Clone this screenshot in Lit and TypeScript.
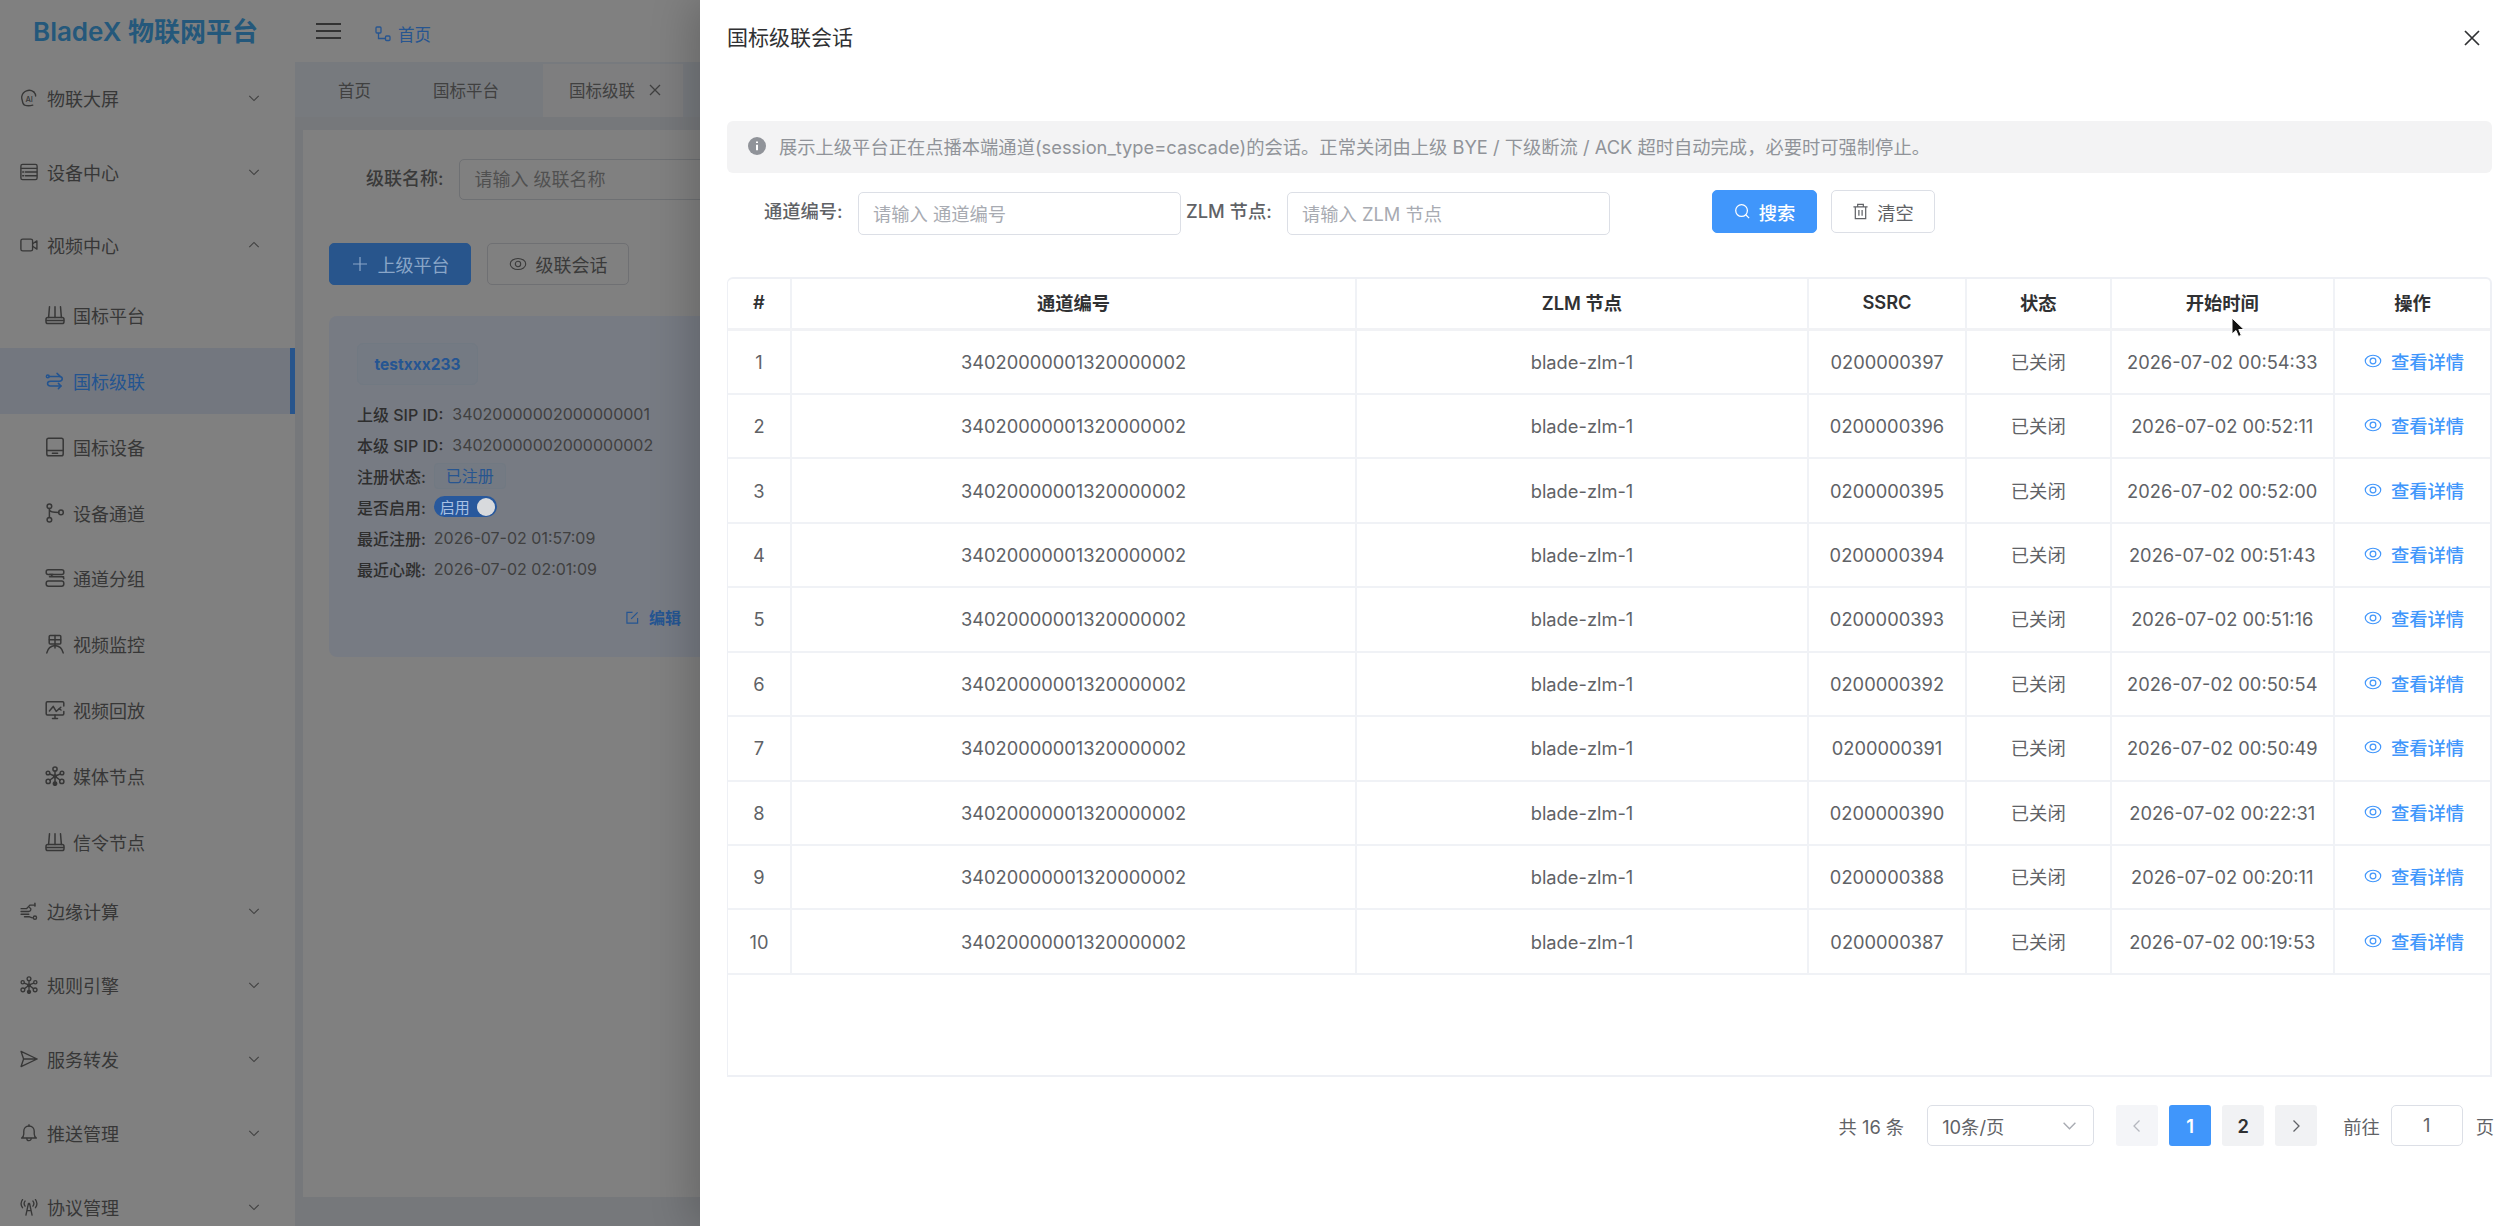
import { LitElement, css, html } from 'lit';
import { customElement } from 'lit/decorators.js';

const routerIcon = html`<svg class="ico" viewBox="0 0 20 20"><path d="M4.500 1.800 3.600 12.500M10 1.800v10.700M15.500 1.800l.9 10.700" /><rect x="1" y="12.500" width="18" height="6" rx="1.800" /><path d="M1.500 15.500h17" /></svg>`;
const nodesIcon = html`<svg class="ico" viewBox="0 0 20 20"><circle cx="10" cy="3" r="2.100" /><circle cx="3" cy="7" r="1.800" /><circle cx="17" cy="7" r="1.800" /><circle cx="3.200" cy="15.400" r="2.100" /><circle cx="16.800" cy="15.400" r="2.100" /><circle cx="10" cy="17.600" r="1.700" fill="currentColor" /><circle cx="10" cy="10.400" r="1.400" fill="currentColor" /><path d="M10 5.200v4.200M4.800 8l4.200 1.700M15.200 8 11 9.700M5 14l3.900-2.900M15 14l-3.900-2.900M10 11.500v4.500" /></svg>`;

const icons: Record<string, unknown> = {
  screen: html`<svg class="ico" viewBox="0 0 20 20"><path d="M15.200 3.200A8.300 8.300 0 0 0 2 8.200c-.4 2.400.4 3.600.6 5 .3 2 .6 4 2.600 4.800 2.400.8 6 .8 9 0" /><path d="M15.400 3.400c1.400 1.400 2 2.800 2 4.400" /><text class="ai" x="6" y="14.500">AI</text></svg>`,
  device: html`<svg class="ico" viewBox="0 0 20 20"><rect x="1" y="1.600" width="18" height="16.800" rx="1.800" /><path d="M1.500 6h17M6 10h12.500M6 14.200h12.500M3 10h1M3 14.200h1" /></svg>`,
  video: html`<svg class="ico" viewBox="0 0 20 20"><rect x="1" y="3.400" width="13" height="13.200" rx="2" /><path d="M14 8.600 18.800 5.400v9.200L14 11.400" /></svg>`,
  router: routerIcon,
  cascade: html`<svg class="ico" viewBox="0 0 20 20"><path d="M4 5.400h10.400c3.800 0 3.800 4.800 0 4.800H5.400c-3.800 0-3.800 4.800 0 4.800H16" /><path d="M12 2.400 15.200 5.400M13.400 12.400 16 15l-2.600 2.600" /><circle cx="2.800" cy="5.400" r="1.400" /></svg>`,
  gbdevice: html`<svg class="ico" viewBox="0 0 20 20"><rect x="1.800" y="1.200" width="16.400" height="17.600" rx="1.800" /><path d="M2.200 13.400h15.600M7.400 16.200h5.200" /></svg>`,
  branch: html`<svg class="ico" viewBox="0 0 20 20"><circle cx="4.400" cy="3.200" r="2.300" /><circle cx="4.400" cy="16.800" r="2.300" /><circle cx="16" cy="9.400" r="2.300" /><path d="M4.400 5.500v9M4.400 7c.6 2 3.400 2.400 9.300 2.400" /></svg>`,
  group: html`<svg class="ico" viewBox="0 0 20 20"><rect x="1.200" y="1.800" width="17.600" height="4.600" rx="2" /><path d="M18.600 8.800H4.500M18.800 10.800c0-1.200-.8-2-2-2M4.500 6.400H8c-1.600 0-2 2.400 0 2.400" /><rect x="1.200" y="13" width="17.600" height="5.200" rx="2.200" /></svg>`,
  monitor: html`<svg class="ico" viewBox="0 0 20 20"><rect x="4.200" y="1.400" width="11.600" height="8.600" rx="1" /><path d="M4.400 5.800h11.200M10 1.600V14M10 11.500c-4.200.4-7.200 3-8.200 7.400M10 11.500c4.200.4 7.200 3 8.200 7.400" /></svg>`,
  playback: html`<svg class="ico" viewBox="0 0 20 20"><path d="M18.800 6V3c0-.8-.6-1.200-1.200-1.200H2.400c-.6 0-1.200.4-1.200 1.200v10.800c0 .8.6 1.200 1.200 1.200h15.200c.6 0 1.200-.4 1.200-1.200v-2.400" /><path d="M4.400 11 8.200 6.400l3 5 3-2.600M7.500 18.400h5M10 15v3.400" /><path d="M15.800 7.200l-1.600 1.600 1.800 1.200" /></svg>`,
  nodes: nodesIcon,
  edge: html`<svg class="ico" viewBox="0 0 20 20"><path d="M1.200 7.400h6l4-4h5.400M1.200 10.600h8.400c2.600 0 3.600-3.400 1-4.400M1.200 13.600h8.600M5 16.400h5.600l3.200 1.200" /><path d="M16.600 1.400v3.200" /><circle cx="16.600" cy="17.400" r="1.800" /></svg>`,
  send: html`<svg class="ico" viewBox="0 0 20 20"><path d="M1.200 1.600 19 10 1.200 18.400 4 10ZM4 10h15" /></svg>`,
  bell: html`<svg class="ico" viewBox="0 0 20 20"><path d="M1.800 15.600h16.400c-1.600-1.200-2.400-2.400-2.400-4.600V8c0-3.400-2.400-5.800-5.800-5.800S4.200 4.600 4.200 8v3c0 2.200-.8 3.400-2.400 4.600Z" /><path d="M10 .8v1.400M7.600 16c0 3.400 4.800 3.400 4.800 0" /></svg>`,
  antenna: html`<svg class="ico" viewBox="0 0 20 20"><path d="M6.600 19 9.400 6h1.200l2.800 13M7.700 14h4.600" /><path d="M5.600 3.400c-1.200 1.600-1.200 4 0 5.600M2.800 1.800c-2 2.800-2 6.200 0 9M14.400 3.400c1.200 1.600 1.200 4 0 5.600M17.200 1.800c2 2.800 2 6.200 0 9" /></svg>`,
};

const chevron = (up = false) =>
  html`<svg class="chev ${up ? 'up' : ''}" viewBox="0 0 14 14"><path d="M1.500 4.500 7 10l5.500-5.500" /></svg>`;
const eyeIcon = html`<svg class="eye" viewBox="0 0 20 20"><ellipse cx="10" cy="10" rx="8.600" ry="6.400" /><circle cx="10" cy="10" r="3.200" /></svg>`;

const menu = [
  { label: '物联大屏', icon: 'screen' },
  { label: '设备中心', icon: 'device' },
  { label: '视频中心', icon: 'video', open: true },
  { label: '国标平台', icon: 'router', sub: true },
  { label: '国标级联', icon: 'cascade', sub: true, active: true },
  { label: '国标设备', icon: 'gbdevice', sub: true },
  { label: '设备通道', icon: 'branch', sub: true },
  { label: '通道分组', icon: 'group', sub: true },
  { label: '视频监控', icon: 'monitor', sub: true },
  { label: '视频回放', icon: 'playback', sub: true },
  { label: '媒体节点', icon: 'nodes', sub: true },
  { label: '信令节点', icon: 'router', sub: true },
  { label: '边缘计算', icon: 'edge' },
  { label: '规则引擎', icon: 'nodes' },
  { label: '服务转发', icon: 'send' },
  { label: '推送管理', icon: 'bell' },
  { label: '协议管理', icon: 'antenna' },
];

const sessions = [
  ['0200000397', '2026-07-02 00:54:33'],
  ['0200000396', '2026-07-02 00:52:11'],
  ['0200000395', '2026-07-02 00:52:00'],
  ['0200000394', '2026-07-02 00:51:43'],
  ['0200000393', '2026-07-02 00:51:16'],
  ['0200000392', '2026-07-02 00:50:54'],
  ['0200000391', '2026-07-02 00:50:49'],
  ['0200000390', '2026-07-02 00:22:31'],
  ['0200000388', '2026-07-02 00:20:11'],
  ['0200000387', '2026-07-02 00:19:53'],
];

@customElement('app-root')
export class AppRoot extends LitElement {
  // the page behind the drawer is written in the colours seen through its mask
  static styles = css`
    :host {
      display: block;
      font-family: Inter, 'Noto Sans CJK SC', sans-serif;
    }
    * {
      box-sizing: border-box;
    }
    .page {
      position: relative;
      display: flex;
      width: 2516px;
      height: 1226px;
      overflow: hidden;
      background: #76787b;
    }
    .ico {
      width: 100%;
      height: 100%;
      fill: none;
      stroke: currentColor;
      stroke-width: 1.500;
      stroke-linecap: round;
      stroke-linejoin: round;
    }
    .ai {
      font-size: 8.500px;
      font-weight: 500;
      fill: currentColor;
      stroke: none;
    }

    /* sidebar */
    .sidebar {
      flex: 0 0 295px;
      background: #808080;
      color: #373737;
    }
    .logo {
      display: flex;
      align-items: center;
      height: 61px;
      padding: 0 0 2px 33px;
      font-size: 26px;
      font-weight: 600;
      color: #24587b;
      white-space: nowrap;
    }
    .item {
      display: flex;
      align-items: center;
      height: 73.800px;
      padding: 0 35px 0 20px;
      font-size: 18px;
    }
    .item .i {
      flex: 0 0 18px;
      height: 18px;
      margin-right: 9px;
    }
    .item .t {
      flex: 1;
    }
    .item.sub {
      height: 65.800px;
      padding-left: 45px;
    }
    .item.sub .i {
      flex: 0 0 20px;
      height: 20px;
      margin-right: 8px;
    }
    .item.active {
      background: #73777f;
      color: #235490;
      border-right: 5px solid #28558c;
    }
    .chev {
      width: 12px;
      height: 12px;
      fill: none;
      stroke: #404040;
      stroke-width: 1.300;
    }
    .chev.up {
      transform: rotate(180deg);
    }

    /* page behind the drawer */
    .main {
      flex: 1;
      min-width: 0;
    }
    .topbar {
      display: flex;
      align-items: center;
      height: 62px;
      padding-left: 21px;
      background: #808080;
    }
    .burger {
      width: 25px;
      height: 16px;
      margin-right: 34px;
      border-top: 2px solid #333;
      border-bottom: 2px solid #333;
      position: relative;
    }
    .burger::after {
      content: '';
      position: absolute;
      left: 0;
      right: 0;
      top: 5px;
      height: 2px;
      background: #333;
    }
    .crumb {
      display: flex;
      align-items: center;
      gap: 7px;
      margin-top: 6px;
      font-size: 16.500px;
      color: #275590;
    }
    .crumb svg {
      width: 16px;
      height: 16px;
      fill: none;
      stroke: currentColor;
      stroke-width: 1.300;
    }
    .tabs {
      display: flex;
      align-items: flex-end;
      height: 55px;
      padding-left: 12px;
      background: #777a7e;
      font-size: 16.500px;
      color: #404040;
    }
    .tab {
      display: flex;
      align-items: center;
      height: 53px;
      padding: 0 31px 2px;
    }
    .tab.active {
      margin-left: 13px;
      padding: 0 22px 2px 26px;
      gap: 14px;
      background: #7e7e7f;
    }
    .tab svg {
      width: 12px;
      height: 12px;
      stroke: #404040;
      stroke-width: 1.300;
    }
    .panel {
      margin: 13px 0 0 8px;
      height: 1067px;
      padding: 29px 0 0 26px;
      background: #808080;
      overflow: hidden;
    }
    .search {
      display: flex;
      align-items: center;
      height: 41px;
      padding-left: 37px;
      font-size: 18px;
      font-weight: 500;
      color: #3a3a3a;
      gap: 16px;
    }
    .search span {
      padding-bottom: 5px;
    }
    .search .field {
      width: 400px;
      height: 41px;
      padding-left: 14px;
      line-height: 39px;
      border: 1px solid #6e7073;
      border-radius: 5px;
      color: #505050;
      font-weight: 400;
    }
    .actions {
      display: flex;
      gap: 16px;
      margin-top: 43px;
    }
    .btn {
      display: flex;
      align-items: center;
      justify-content: center;
      gap: 9px;
      width: 142px;
      height: 42px;
      border: 1px solid #6f7073;
      border-radius: 5px;
      font-size: 18px;
      color: #3a3a3a;
    }
    .btn svg {
      width: 18px;
      height: 18px;
      fill: none;
      stroke: currentColor;
      stroke-width: 1.200;
    }
    .btn.primary {
      border-color: #28558c;
      background: #28558c;
      color: #8aa6c8;
    }
    .platform {
      width: 380px;
      height: 341px;
      margin-top: 31px;
      padding: 27px 0 0 28px;
      border-radius: 8px;
      background: #777b83;
      font-size: 16px;
      color: #404040;
    }
    .name {
      width: 121px;
      height: 42px;
      line-height: 42px;
      margin-bottom: 13px;
      text-align: center;
      font-size: 15.500px;
      font-weight: 700;
      color: #255592;
      background: #747a83;
      border: 1px solid #717982;
      border-radius: 6px;
    }
    .line {
      display: flex;
      align-items: center;
      height: 31px;
      gap: 8px;
      white-space: nowrap;
    }
    .line b {
      font-weight: 500;
      color: #2e2e2e;
    }
    .line.sip {
      gap: 9px;
    }
    .status {
      height: 26px;
      padding: 0 11px;
      line-height: 25px;
      color: #275590;
      background: #747a83;
      border: 1px solid #717982;
      border-radius: 4px;
    }
    .switch {
      display: flex;
      align-items: center;
      justify-content: space-between;
      width: 63px;
      height: 21px;
      padding: 0 2px 0 6px;
      border-radius: 11px;
      background: #28589c;
      color: #a9c2e4;
      font-size: 15px;
    }
    .switch::after {
      content: '';
      width: 18px;
      height: 18px;
      border-radius: 50%;
      background: #d8dadd;
    }
    .foot {
      display: flex;
      align-items: center;
      gap: 10px;
      margin-top: 20px;
      padding-left: 269px;
      height: 26px;
      white-space: nowrap;
      color: #255592;
      font-weight: 600;
    }
    .foot svg {
      flex: 0 0 13px;
      height: 13px;
      fill: none;
      stroke: currentColor;
      stroke-width: 1.300;
    }
    .foot span + span {
      margin-left: 9px;
    }

    /* drawer */
    .drawer {
      position: absolute;
      top: 0;
      right: 0;
      bottom: 0;
      width: 1816px;
      padding: 0 24px 0 27px;
      background: #fff;
      box-shadow: -8px 0 40px rgba(0, 0, 0, 0.2);
      font-size: 18.300px;
      color: #606266;
    }
    .head {
      display: flex;
      align-items: center;
      justify-content: space-between;
      height: 72px;
      margin-bottom: 49px;
      font-size: 21px;
      color: #303133;
    }
    .close {
      width: 16px;
      height: 16px;
      margin: 3px 12px 0 0;
      fill: none;
      stroke: #303133;
      stroke-width: 1.700;
    }
    .alert {
      display: flex;
      align-items: center;
      gap: 13px;
      height: 52px;
      padding: 0 0 2px 21px;
      border-radius: 6px;
      background: #f3f3f4;
      color: #909399;
      white-space: nowrap;
    }
    .alert svg {
      flex: 0 0 18px;
      height: 18px;
    }
    .filters {
      display: flex;
      align-items: flex-start;
      height: 45px;
      margin-top: 17px;
      padding-left: 37px;
    }
    .filters label {
      line-height: 43px;
      font-weight: 500;
      white-space: nowrap;
    }
    .ch {
      width: 79px;
      margin-right: 15px;
    }
    .zlm {
      width: 86px;
      margin: 0 15px 0 5px;
    }
    .filters input {
      width: 323px;
      height: 43px;
      margin-top: 2px;
      padding: 0 14px;
      border: 1px solid #dcdfe6;
      border-radius: 5px;
      outline: none;
      font: inherit;
      color: #606266;
    }
    .filters input::placeholder {
      color: #a8abb2;
    }
    .fbtn {
      display: flex;
      align-items: center;
      justify-content: center;
      gap: 8px;
      width: 104px;
      height: 43px;
      border: 1px solid #dcdfe6;
      border-radius: 5px;
      background: #fff;
      color: #606266;
    }
    .fbtn svg {
      width: 17px;
      height: 17px;
      fill: none;
      stroke: currentColor;
      stroke-width: 1.300;
    }
    .fbtn.go {
      width: 105px;
      margin: 0 14px 0 102px;
      border-color: #4096fb;
      background: #4096fb;
      color: #fff;
      font-weight: 500;
    }
    .table {
      height: 800px;
      margin-top: 42px;
      border: 2px solid #eef0f5;
      border-left-width: 1px;
      border-radius: 6px 6px 0 0;
    }
    .tr {
      display: grid;
      grid-template-columns: 64px 565px 452px 158px 144.500px 223.500px 1fr;
      height: 64.450px;
      border-bottom: 2px solid #f0f2f6;
    }
    .tr.th {
      height: 51.500px;
      border-bottom: 3px solid #f1f2f5;
      font-weight: 600;
      color: #303133;
    }
    .tr > div {
      display: flex;
      align-items: center;
      justify-content: center;
      gap: 9px;
      border-right: 2px solid #f0f2f6;
      white-space: nowrap;
    }
    .tr > div:last-child {
      border-right: 0;
    }
    .tr.th > div,
    .tr > .state {
      padding-bottom: 2px;
    }
    .link {
      padding: 0 0 2px 3px;
      color: #4096fb;
      font-weight: 500;
    }
    .eye {
      width: 18px;
      height: 18px;
      fill: none;
      stroke: currentColor;
      stroke-width: 1.300;
    }
    .pager {
      display: flex;
      align-items: center;
      justify-content: flex-end;
      height: 41px;
      margin: 28px -2px 0 0;
    }
    .select {
      display: flex;
      align-items: center;
      justify-content: space-between;
      width: 167px;
      height: 41px;
      margin: 0 22px 0 23px;
      padding: 0 16px 0 14px;
      border: 1px solid #dcdfe6;
      border-radius: 5px;
    }
    .select .chev {
      width: 15px;
      height: 15px;
      stroke: #a8abb2;
    }
    .pg {
      display: flex;
      align-items: center;
      justify-content: center;
      width: 42px;
      height: 41px;
      margin-right: 11px;
      border-radius: 3px;
      background: #f1f2f4;
      color: #303133;
      font-weight: 600;
    }
    .pg svg {
      width: 14px;
      height: 14px;
      fill: none;
      stroke: #606266;
      stroke-width: 1.300;
    }
    .pg.off {
      background: #f4f5f8;
    }
    .pg.off svg {
      stroke: #b4b7be;
    }
    .pg.on {
      background: #4096fb;
      color: #fff;
    }
    .pg.last {
      margin-right: 26px;
    }
    .goto {
      width: 72px;
      height: 41px;
      margin: 0 13px 0 11px;
      line-height: 39px;
      text-align: center;
      border: 1px solid #dcdfe6;
      border-radius: 5px;
    }
    .cursor {
      position: absolute;
      left: 2231px;
      top: 317px;
      width: 14px;
      height: 21px;
    }
  `;

  renderMenu() {
    return menu.map(
      (m) => html`
        <div class="item ${m.sub ? 'sub' : ''} ${m.active ? 'active' : ''}">
          <div class="i">${icons[m.icon]}</div>
          <div class="t">${m.label}</div>
          ${m.sub ? '' : chevron(m.open)}
        </div>
      `
    );
  }

  renderBehind() {
    return html`
      <div class="main">
        <div class="topbar">
          <div class="burger"></div>
          <div class="crumb">
            <svg viewBox="0 0 16 16"><rect x="1" y="1" width="5" height="6" rx="1" /><rect x="10.500" y="10" width="4.500" height="4.500" rx="1" /><path d="M3.500 7v5.500h7" /></svg>
            首页
          </div>
        </div>
        <div class="tabs">
          <div class="tab">首页</div>
          <div class="tab">国标平台</div>
          <div class="tab active">
            国标级联
            <svg viewBox="0 0 12 12"><path d="M1 1l10 10M11 1 1 11" /></svg>
          </div>
        </div>
        <div class="panel">
          <div class="search">
            <span>级联名称:</span>
            <div class="field">请输入 级联名称</div>
          </div>
          <div class="actions">
            <div class="btn primary">
              <svg viewBox="0 0 18 18"><path d="M9 2v14M2 9h14" /></svg>
              上级平台
            </div>
            <div class="btn">
              <svg viewBox="0 0 20 20"><ellipse cx="10" cy="10" rx="8.600" ry="6.200" /><circle cx="10" cy="10" r="3" /></svg>
              级联会话
            </div>
          </div>
          <div class="platform">
            <div class="name">testxxx233</div>
            <div class="line sip"><b>上级 SIP ID:</b>34020000002000000001</div>
            <div class="line sip"><b>本级 SIP ID:</b>34020000002000000002</div>
            <div class="line"><b>注册状态:</b><span class="status">已注册</span></div>
            <div class="line"><b>是否启用:</b><span class="switch">启用</span></div>
            <div class="line"><b>最近注册:</b>2026-07-02 01:57:09</div>
            <div class="line"><b>最近心跳:</b>2026-07-02 02:01:09</div>
            <div class="foot">
              <svg viewBox="0 0 14 14"><path d="M12.500 7.500V13H1V1.500h6M5.500 8.500 12.500 1.500" /></svg>
              <span>编辑</span><span>删除</span>
            </div>
          </div>
        </div>
      </div>
    `;
  }

  renderDrawer() {
    return html`
      <div class="drawer">
        <div class="head">
          国标级联会话
          <svg class="close" viewBox="0 0 16 16"><path d="M1 1l14 14M15 1 1 15" /></svg>
        </div>
        <div class="alert">
          <svg viewBox="0 0 18 18"><circle cx="9" cy="9" r="9" fill="#909399" /><path d="M9 7.800v5.400M9 4.500v1.600" stroke="#fff" stroke-width="2" /></svg>
          展示上级平台正在点播本端通道(session_type=cascade)的会话。正常关闭由上级 BYE / 下级断流 / ACK 超时自动完成，必要时可强制停止。
        </div>
        <div class="filters">
          <label class="ch">通道编号:</label>
          <input placeholder="请输入 通道编号" />
          <label class="zlm">ZLM 节点:</label>
          <input placeholder="请输入 ZLM 节点" />
          <div class="fbtn go">
            <svg viewBox="0 0 18 18"><circle cx="8" cy="8" r="6.200" /><path d="M12.500 12.500 16 16" /></svg>
            搜索
          </div>
          <div class="fbtn">
            <svg viewBox="0 0 18 18"><path d="M1.500 4h15M6 4V1.500h6V4M3.500 4v12.500h11V4M7.300 7.500v6M10.700 7.500v6" /></svg>
            清空
          </div>
        </div>
        <div class="table">
          <div class="tr th">
            <div>#</div>
            <div>通道编号</div>
            <div>ZLM 节点</div>
            <div>SSRC</div>
            <div>状态</div>
            <div>开始时间</div>
            <div>操作</div>
          </div>
          ${sessions.map(
            (s, i) => html`
              <div class="tr">
                <div>${i + 1}</div>
                <div>34020000001320000002</div>
                <div>blade-zlm-1</div>
                <div>${s[0]}</div>
                <div class="state">已关闭</div>
                <div>${s[1]}</div>
                <div class="link">${eyeIcon}查看详情</div>
              </div>
            `
          )}
        </div>
        <div class="pager">
          <span>共 16 条</span>
          <div class="select">10条/页${chevron()}</div>
          <div class="pg off"><svg viewBox="0 0 14 14"><path d="M9.500 1.500 4 7l5.500 5.500" /></svg></div>
          <div class="pg on">1</div>
          <div class="pg">2</div>
          <div class="pg last"><svg viewBox="0 0 14 14"><path d="M4.500 1.500 10 7l-5.500 5.500" /></svg></div>
          <span>前往</span>
          <div class="goto">1</div>
          <span>页</span>
        </div>
      </div>
    `;
  }

  render() {
    return html`
      <div class="page">
        <div class="sidebar">
          <div class="logo">BladeX 物联网平台</div>
          ${this.renderMenu()}
        </div>
        ${this.renderBehind()}
        ${this.renderDrawer()}
        <svg class="cursor" viewBox="0 0 14 21"><path d="M1 1v16l4-3.500 2.500 6 2.800-1.200-2.500-5.800H13Z" fill="#111" stroke="#fff" stroke-width="1" /></svg>
      </div>
    `;
  }
}
